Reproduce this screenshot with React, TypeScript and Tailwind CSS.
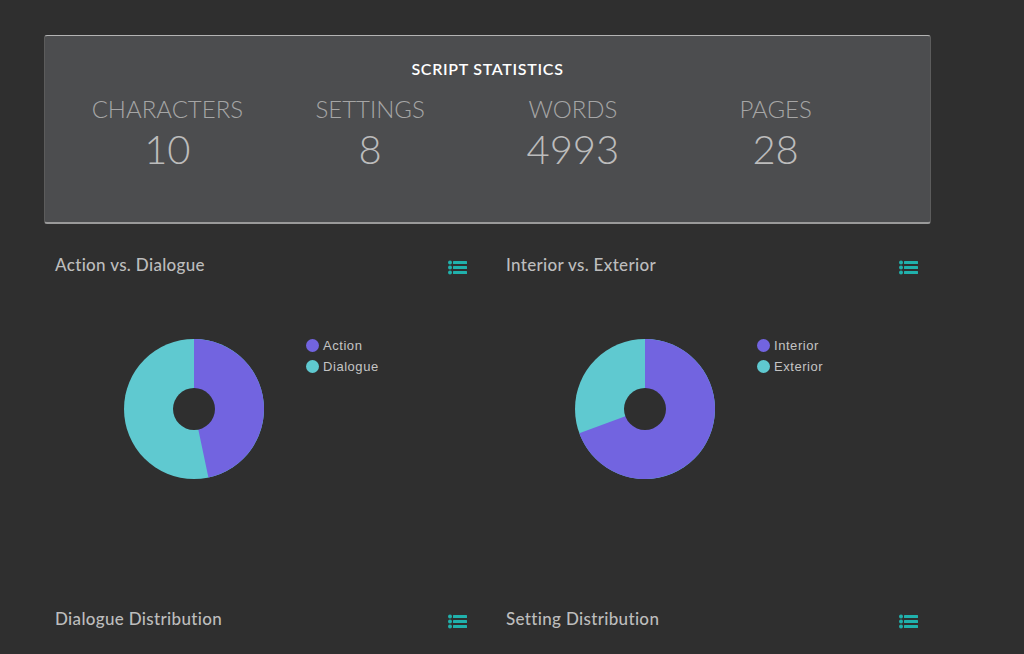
const stats = [
  { label: "CHARACTERS", value: "10" },
  { label: "SETTINGS", value: "8" },
  { label: "WORDS", value: "4993" },
  { label: "PAGES", value: "28" },
];

const PURPLE = "#7264e0";
const TEAL = "#5fc9d0";

function ListIcon() {
  return (
    <svg width="19" height="15" viewBox="0 0 19 15" fill="#20b1ac" className="block">
      <circle cx="2" cy="2.5" r="2" />
      <circle cx="2" cy="7.5" r="2" />
      <circle cx="2" cy="12.5" r="2" />
      <rect x="5" y="1" width="14" height="3" rx="0.5" />
      <rect x="5" y="6" width="14" height="3" rx="0.5" />
      <rect x="5" y="11" width="14" height="3" rx="0.5" />
    </svg>
  );
}

// first slice runs clockwise from 12 o'clock, the rest of the ring is the second colour
function Donut({ share }: { share: number }) {
  const r = 70;
  const a = share * 2 * Math.PI;
  const x = 70 + r * Math.sin(a);
  const y = 70 - r * Math.cos(a);
  const large = share > 0.5 ? 1 : 0;
  return (
    <svg width="140" height="140" viewBox="0 0 140 140" className="block shrink-0">
      <circle cx="70" cy="70" r="70" fill={TEAL} />
      <path d={`M70 70 L70 0 A${r} ${r} 0 ${large} 1 ${x} ${y} Z`} fill={PURPLE} />
      <circle cx="70" cy="70" r="21" fill="#2f2f2f" />
    </svg>
  );
}

function LegendRow({ color, label }: { color: string; label: string }) {
  return (
    <div className="flex h-[21px] items-center gap-[4px]">
      <span className="h-[13px] w-[13px] rounded-full" style={{ background: color }} />
      <span className="font-['Liberation_Sans',Arial,sans-serif] text-[13px] tracking-[0.55px] text-[#c4c4c4]">{label}</span>
    </div>
  );
}

function ChartHeader({ title }: { title: string }) {
  return (
    <div className="flex h-[22px] items-center justify-between pr-[28px]">
      <h2 className="mt-[-2px] text-[17px] font-medium leading-[22px] tracking-[0.33px] text-[#bdbdbd]">{title}</h2>
      <span className="mt-[3px]"><ListIcon /></span>
    </div>
  );
}

function PieCard({ title, share, labels }: { title: string; share: number; labels: [string, string] }) {
  return (
    <section className="h-[354px] pl-[11px]">
      <ChartHeader title={title} />
      <div className="mt-[62px] flex pl-[69px]">
        <Donut share={share} />
        <div className="ml-[42px] mt-[-4px]">
          <LegendRow color={PURPLE} label={labels[0]} />
          <LegendRow color={TEAL} label={labels[1]} />
        </div>
      </div>
    </section>
  );
}

export default function App() {
  return (
    <div className="h-[654px] w-[1024px] overflow-hidden bg-[#2f2f2f] pl-[44px] pt-[35px] font-['Lato','Noto_Sans',sans-serif]">
      <div className="h-[189px] w-[887px] rounded-[3px] border-t border-b-2 border-l border-r border-t-[#b4b4b4] border-b-[#9a9a9a] border-l-[#5c5c5c] border-r-[#5c5c5c] bg-[#4c4d4f] pt-[22px]">
        <h1 className="text-center text-[16px] font-semibold leading-[22px] tracking-[0.7px] text-white">SCRIPT STATISTICS</h1>
        <div className="mt-[15px] grid grid-cols-4 pl-[21px] pr-[53px]">
          {stats.map((s) => (
            <div key={s.label} className="text-center font-light text-[#bcbcbc]">
              <div className="text-[24px] leading-[28px] text-[#a6a6a6]">{s.label}</div>
              <div className="text-[40px] leading-[52px]">{s.value}</div>
            </div>
          ))}
        </div>
      </div>

      <div className="mt-[31px] grid w-[902px] grid-cols-2">
        <PieCard title="Action vs. Dialogue" share={0.467} labels={["Action", "Dialogue"]} />
        <PieCard title="Interior vs. Exterior" share={0.694} labels={["Interior", "Exterior"]} />
        <section className="pl-[11px]"><ChartHeader title="Dialogue Distribution" /></section>
        <section className="pl-[11px]"><ChartHeader title="Setting Distribution" /></section>
      </div>
    </div>
  );
}
